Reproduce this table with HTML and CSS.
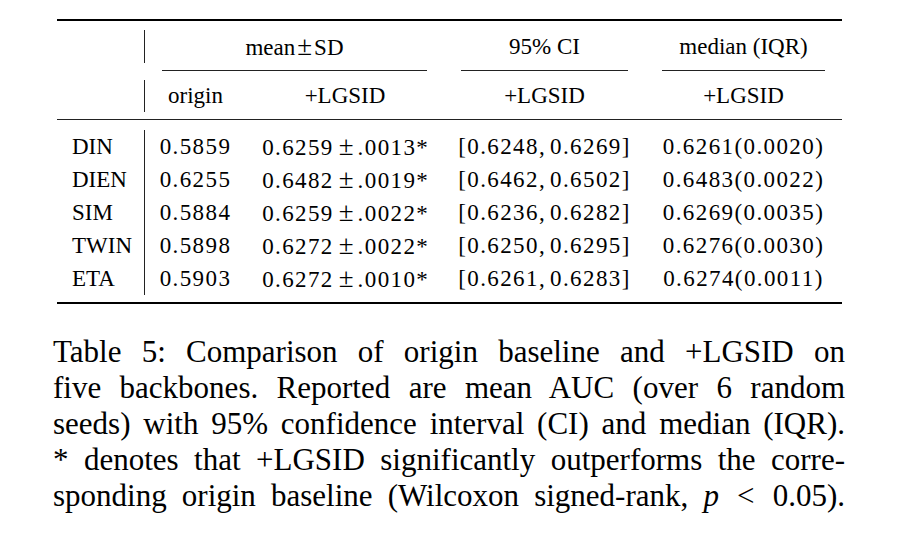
FILE: index.html
```html
<!DOCTYPE html>
<html lang="en">
<head>
<meta charset="utf-8">
<title>Table 5</title>
<link rel="stylesheet" href="styles.css">
</head>
<body>
<div class="sheet">
  <div class="table">
    <div class="rule top"></div>
    <div class="row head1">
      <div class="cell c0 vbar"></div>
      <div class="cell span2">mean<span class="pm-h">±</span>SD</div>
      <div class="cell">95% CI</div>
      <div class="cell">median (IQR)</div>
    </div>
    <div class="row cmid">
      <div class="cell c0"></div>
      <div class="cell span2"><div class="cline"></div></div>
      <div class="cell"><div class="cline"></div></div>
      <div class="cell"><div class="cline"></div></div>
    </div>
    <div class="row head2">
      <div class="cell c0 vbar"></div>
      <div class="cell">origin</div>
      <div class="cell">+LGSID</div>
      <div class="cell">+LGSID</div>
      <div class="cell">+LGSID</div>
    </div>
    <div class="rule mid"></div>
    <div class="tbody">
      <div class="body-grid">
        <div class="labels vbar">
          <div class="lab">DIN</div>
          <div class="lab">DIEN</div>
          <div class="lab">SIM</div>
          <div class="lab">TWIN</div>
          <div class="lab">ETA</div>
        </div>
        <div class="col">
          <div class="num">0.5859</div>
          <div class="num">0.6255</div>
          <div class="num">0.5884</div>
          <div class="num">0.5898</div>
          <div class="num">0.5903</div>
        </div>
        <div class="col">
          <div class="num">0.6259<span class="pm">±</span>.0013<span class="ast">*</span></div>
          <div class="num">0.6482<span class="pm">±</span>.0019<span class="ast">*</span></div>
          <div class="num">0.6259<span class="pm">±</span>.0022<span class="ast">*</span></div>
          <div class="num">0.6272<span class="pm">±</span>.0022<span class="ast">*</span></div>
          <div class="num">0.6272<span class="pm">±</span>.0010<span class="ast">*</span></div>
        </div>
        <div class="col">
          <div class="num">[0.6248,<span class="ts"></span>0.6269]</div>
          <div class="num">[0.6462,<span class="ts"></span>0.6502]</div>
          <div class="num">[0.6236,<span class="ts"></span>0.6282]</div>
          <div class="num">[0.6250,<span class="ts"></span>0.6295]</div>
          <div class="num">[0.6261,<span class="ts"></span>0.6283]</div>
        </div>
        <div class="col">
          <div class="num">0.6261(0.0020)</div>
          <div class="num">0.6483(0.0022)</div>
          <div class="num">0.6269(0.0035)</div>
          <div class="num">0.6276(0.0030)</div>
          <div class="num">0.6274(0.0011)</div>
        </div>
      </div>
    </div>
    <div class="rule bottom"></div>
  </div>

  <div class="cap">
    <div class="ln">Table 5: Comparison of origin baseline and +LGSID on</div>
    <div class="ln">five backbones. Reported are mean AUC (over 6 random</div>
    <div class="ln">seeds) with 95% confidence interval (CI) and median (IQR).</div>
    <div class="ln">* denotes that +LGSID significantly outperforms the corre-</div>
    <div class="ln">sponding origin baseline (Wilcoxon signed-rank, <span class="pv">p</span> <span class="lt">&lt;</span> 0.05).</div>
  </div>
</div>
</body>
</html>
```

FILE: styles.css
```css
body { margin: 0; font-size: 24px; }

.sheet { width: 912px; height: 558px; background: #ffffff; }

.cell { font-family: "Liberation Serif"; }
.lab { font-family: "Liberation Serif"; }
.num { font-family: "Liberation Serif"; }
.ln { font-family: "Liberation Serif"; }
.pm, .pm-h, .ast, .pv, .lt { font-family: "Liberation Serif"; }

.table {
  margin: 19px 0 0 57px;
  width: 785px;
  font-size: 23px;
  color: #000000;
}

.rule { background: #000000; }
.rule.top { height: 2px; }
.rule.mid { height: 1px; background: #222222; }
.rule.bottom { height: 2px; }

.row {
  display: grid;
  grid-template-columns: 88px 101px 198px 201px 197px;
}

.head1 { padding: 9px 0 7px; }
.head2 { padding: 9px 0 7px; }
.head1 .cell { height: 33px; line-height: 33px; }
.head2 .cell { height: 32px; line-height: 32px; }

.cell {
  text-align: center;
  white-space: nowrap;
}

.span2 { grid-column: span 2; }

.vbar { border-right: 1px solid #222222; }

.pm-h {
  font-size: 27px;
  margin: 0 2px;
}

.cmid { height: 1px; }
.cmid .cell { height: 1px; }
.cline {
  height: 1px;
  background: #222222;
  margin: 0 17px;
}

.tbody { padding: 10px 0 7px; }

.body-grid {
  display: grid;
  grid-template-columns: 88px 101px 198px 201px 197px;
}

.labels { padding-left: 15px; }

.lab {
  height: 33px;
  line-height: 33px;
}

.col { text-align: center; }

.num {
  height: 33px;
  line-height: 33px;
  letter-spacing: 1.4px;
  white-space: nowrap;
}

.pm {
  font-size: 27px;
  margin: 0 4px 0 5px;
  letter-spacing: 0;
}

.ast { letter-spacing: 0; }

.ts {
  display: inline-block;
  width: 4px;
}

.cap {
  margin: 30px 0 0 53px;
  width: 792px;
  font-size: 31px;
  line-height: 36px;
  color: #000000;
}

.ln {
  text-align: justify;
  text-align-last: justify;
  white-space: nowrap;
}

.pv { font-style: italic; }

.lt { margin: 0 3px; }
```
